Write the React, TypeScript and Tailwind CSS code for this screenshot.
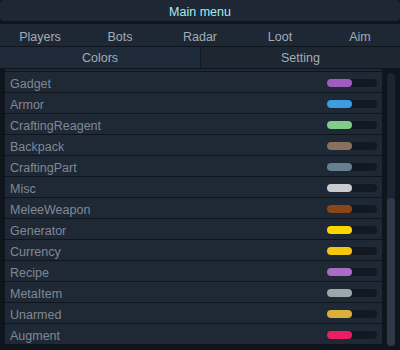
import React from 'react'

const TABS = ['Players', 'Bots', 'Radar', 'Loot', 'Aim']

const ITEMS: { name: string; color: string }[] = [
  { name: 'Gadget', color: '#9f5cc0' },
  { name: 'Armor', color: '#3a9ee0' },
  { name: 'CraftingReagent', color: '#80cc88' },
  { name: 'Backpack', color: '#88705e' },
  { name: 'CraftingPart', color: '#687f8f' },
  { name: 'Misc', color: '#c8ccd0' },
  { name: 'MeleeWeapon', color: '#8b4516' },
  { name: 'Generator', color: '#ffd700' },
  { name: 'Currency', color: '#f4c611' },
  { name: 'Recipe', color: '#a86cc4' },
  { name: 'MetaItem', color: '#9aa8aa' },
  { name: 'Unarmed', color: '#d8b03a' },
  { name: 'Augment', color: '#ea1e63' },
]

export default function App() {
  return (
    <div className="w-[400px] h-[350px] overflow-hidden bg-[#0f151d] font-['Liberation_Sans',Arial,sans-serif] text-[12.5px]">
      {/* Title bar */}
      <div className="h-[21px] pt-[3px] rounded-[4px] bg-[#1e2733] flex items-center justify-center text-[#a4eef2]">
        Main menu
      </div>

      {/* Top tabs */}
      <div className="mt-[3px] h-[22px] pt-[4px] grid grid-cols-5 bg-[#1e2834] text-[#a2acb8]">
        {TABS.map((t) => (
          <div key={t} className="flex items-center justify-center">{t}</div>
        ))}
      </div>
      <div className="mt-px h-[20px] grid grid-cols-2 text-[#a2acb8]">
        <div className="flex items-center justify-center pt-[2px] bg-[#202b39]">Colors</div>
        <div className="flex items-center justify-center pt-[2px] bg-[#1d2631] border-l border-[#141b24]">Setting</div>
      </div>

      {/* List */}
      <div className="mt-[2px] flex">
        <div className="ml-[5px] w-[377px] flex flex-col gap-px">
          <div className="h-[2px] bg-[#1f2835]" />
          {ITEMS.map((item) => (
            <div key={item.name} className="h-[20px] bg-[#1f2835] flex items-center justify-between pl-[5px] pr-[5px]">
              <span className="text-[#7f8995] pt-[4px]">{item.name}</span>
              <div className="w-[50px] h-[8px] rounded-full bg-[#121922] mt-px">
                <div className="w-[25px] h-[8px] rounded-full" style={{ backgroundColor: item.color }} />
              </div>
            </div>
          ))}
        </div>
        <div className="ml-[5px] mt-[4px] w-[8px] h-[273px] rounded-full bg-[#1c2430] flex flex-col justify-end">
          <div className="h-[148px] rounded-full bg-[#2e3847]" />
        </div>
      </div>
    </div>
  )
}
